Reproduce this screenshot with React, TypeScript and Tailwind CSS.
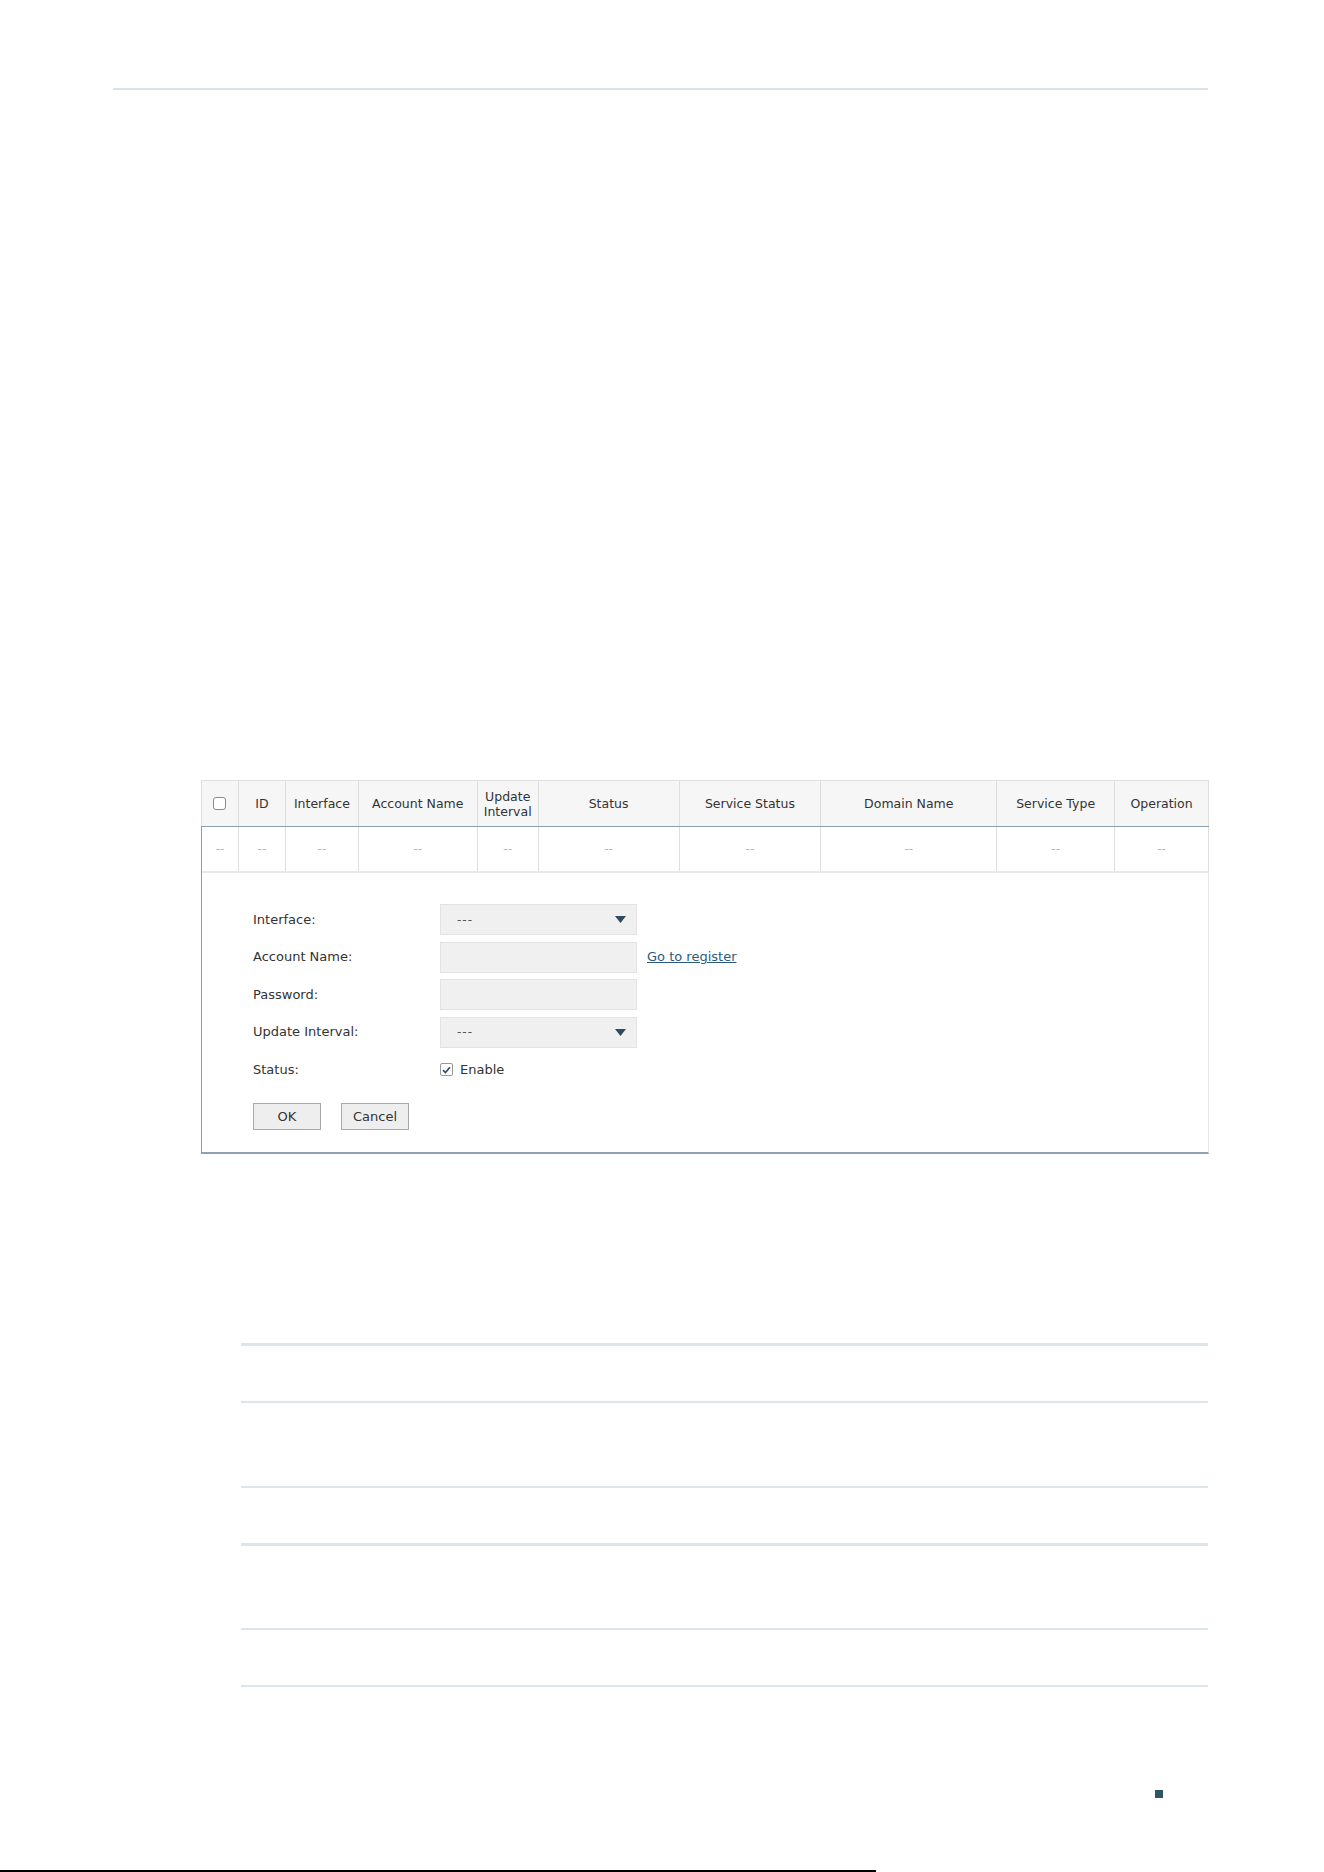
import React from 'react';

const columns = [
  { key: 'check', label: '', width: 'w-[37px]' },
  { key: 'id', label: 'ID', width: 'w-[47px]' },
  { key: 'iface', label: 'Interface', width: 'w-[73px]' },
  { key: 'account', label: 'Account Name', width: 'w-[119px]' },
  { key: 'interval', label: 'Update Interval', width: 'w-[61px]' },
  { key: 'status', label: 'Status', width: 'w-[141px]' },
  { key: 'svcStatus', label: 'Service Status', width: 'w-[142px]' },
  { key: 'domain', label: 'Domain Name', width: 'w-[176px]' },
  { key: 'svcType', label: 'Service Type', width: 'w-[118px]' },
  { key: 'op', label: 'Operation', width: 'w-[94px]' },
];

const font = { fontFamily: '"DejaVu Sans", Verdana, sans-serif' };

const Arrow = () => (
  <svg width="11" height="7" viewBox="0 0 11 7" className="shrink-0">
    <path d="M0 0 H11 L5.5 7 Z" fill="#2f4c5e" />
  </svg>
);

const SelectBox = () => (
  <div className="flex h-[31px] w-[197px] items-center justify-between border border-[#e3e3e3] bg-[#f1f0f0] pl-[16px] pr-[10px]">
    <span className="text-[12px] tracking-[1px] text-[#555]">---</span>
    <Arrow />
  </div>
);

const TextBox = () => <div className="h-[31px] w-[197px] border border-[#e3e3e3] bg-[#f1f0f0]" />;

const FormRow = ({ label, children }: { label: string; children: React.ReactNode }) => (
  <div className="flex h-[31px] items-center">
    <span className="w-[187px] text-[13px] text-[#333]">{label}</span>
    {children}
  </div>
);

const DdnsTable = () => (
  <div className="ml-[201px] mt-[690px] w-[1008px]" style={font}>
    {/* header */}
    <div className="flex h-[46px] border-l border-t border-[#dedede] bg-[#f6f6f6]">
      {columns.map((c) => (
        <div
          key={c.key}
          className={`${c.width} flex items-center justify-center border-r border-[#dedede] text-center text-[12.5px] leading-[15px] text-[#333]`}
        >
          {c.key === 'check' ? (
            <span className="block h-[13px] w-[13px] rounded-[3px] border border-[#8a8a8a] bg-white" />
          ) : (
            c.label
          )}
        </div>
      ))}
    </div>
    <div className="border-l-[1.5px] border-[#8c9eb1]">
      {/* empty data row */}
      <div className="flex h-[47px] border-t border-b-2 border-t-[#8c9eb1] border-b-[#e8e8e8]">
        {columns.map((c) => (
          <div
            key={c.key}
            className={`${c.width} flex items-center justify-center border-r border-[#dedede] text-[12px] text-[#b5b5b5]`}
          >
            --
          </div>
        ))}
      </div>
      {/* edit form */}
      <div className="border-b-2 border-r border-b-[#8fa1b3] border-r-[#e6e6e6] pb-[22px] pl-[51px] pt-[31px]">
        <div className="flex flex-col gap-[6.5px]">
          <FormRow label="Interface:">
            <SelectBox />
          </FormRow>
          <FormRow label="Account Name:">
            <TextBox />
            <a className="ml-[10px] text-[13px] text-[#2b5c7c] underline">Go to register</a>
          </FormRow>
          <FormRow label="Password:">
            <TextBox />
          </FormRow>
          <FormRow label="Update Interval:">
            <SelectBox />
          </FormRow>
          <FormRow label="Status:">
            <span className="flex h-[13px] w-[13px] items-center justify-center rounded-[2px] border border-[#999] bg-white">
              <svg width="9" height="8" viewBox="0 0 9 8">
                <path d="M1 4.2 L3.4 6.5 L8 1.3" stroke="#2f4c5e" strokeWidth="1.7" fill="none" />
              </svg>
            </span>
            <span className="ml-[7px] text-[13px] text-[#333]">Enable</span>
          </FormRow>
        </div>
        <div className="mt-[18px] flex gap-[20px]">
          <button className="h-[27px] w-[68px] border border-[#a9a9a9] bg-[#eeeeee] text-[13px] text-[#333]">OK</button>
          <button className="h-[27px] w-[68px] border border-[#a9a9a9] bg-[#eeeeee] text-[13px] text-[#333]">Cancel</button>
        </div>
      </div>
    </div>
  </div>
);

export default function App() {
  return (
    <div className="relative h-[1872px] w-[1324px] overflow-hidden bg-white">
      <div className="ml-[113px] mt-[88px] h-[2px] w-[1095px] bg-[#dae4e8]" />
      <DdnsTable />
      <div className="ml-[241px] w-[967px]">
        <div className="mt-[189px] h-[3px] bg-[#dce6ea]" />
        <div className="mt-[55px] h-[2px] bg-[#dce6ea]" />
        <div className="mt-[83px] h-[2px] bg-[#dce6ea]" />
        <div className="mt-[55px] h-[3px] bg-[#dce6ea]" />
        <div className="mt-[82px] h-[2px] bg-[#dce6ea]" />
        <div className="mt-[55px] h-[2px] bg-[#dce6ea]" />
      </div>
      <div className="ml-[1155px] mt-[103px] h-[8px] w-[8px] bg-[#2e5468]" />
      <div className="mt-[72px] h-[2px] w-[876px] bg-black" />
    </div>
  );
}
